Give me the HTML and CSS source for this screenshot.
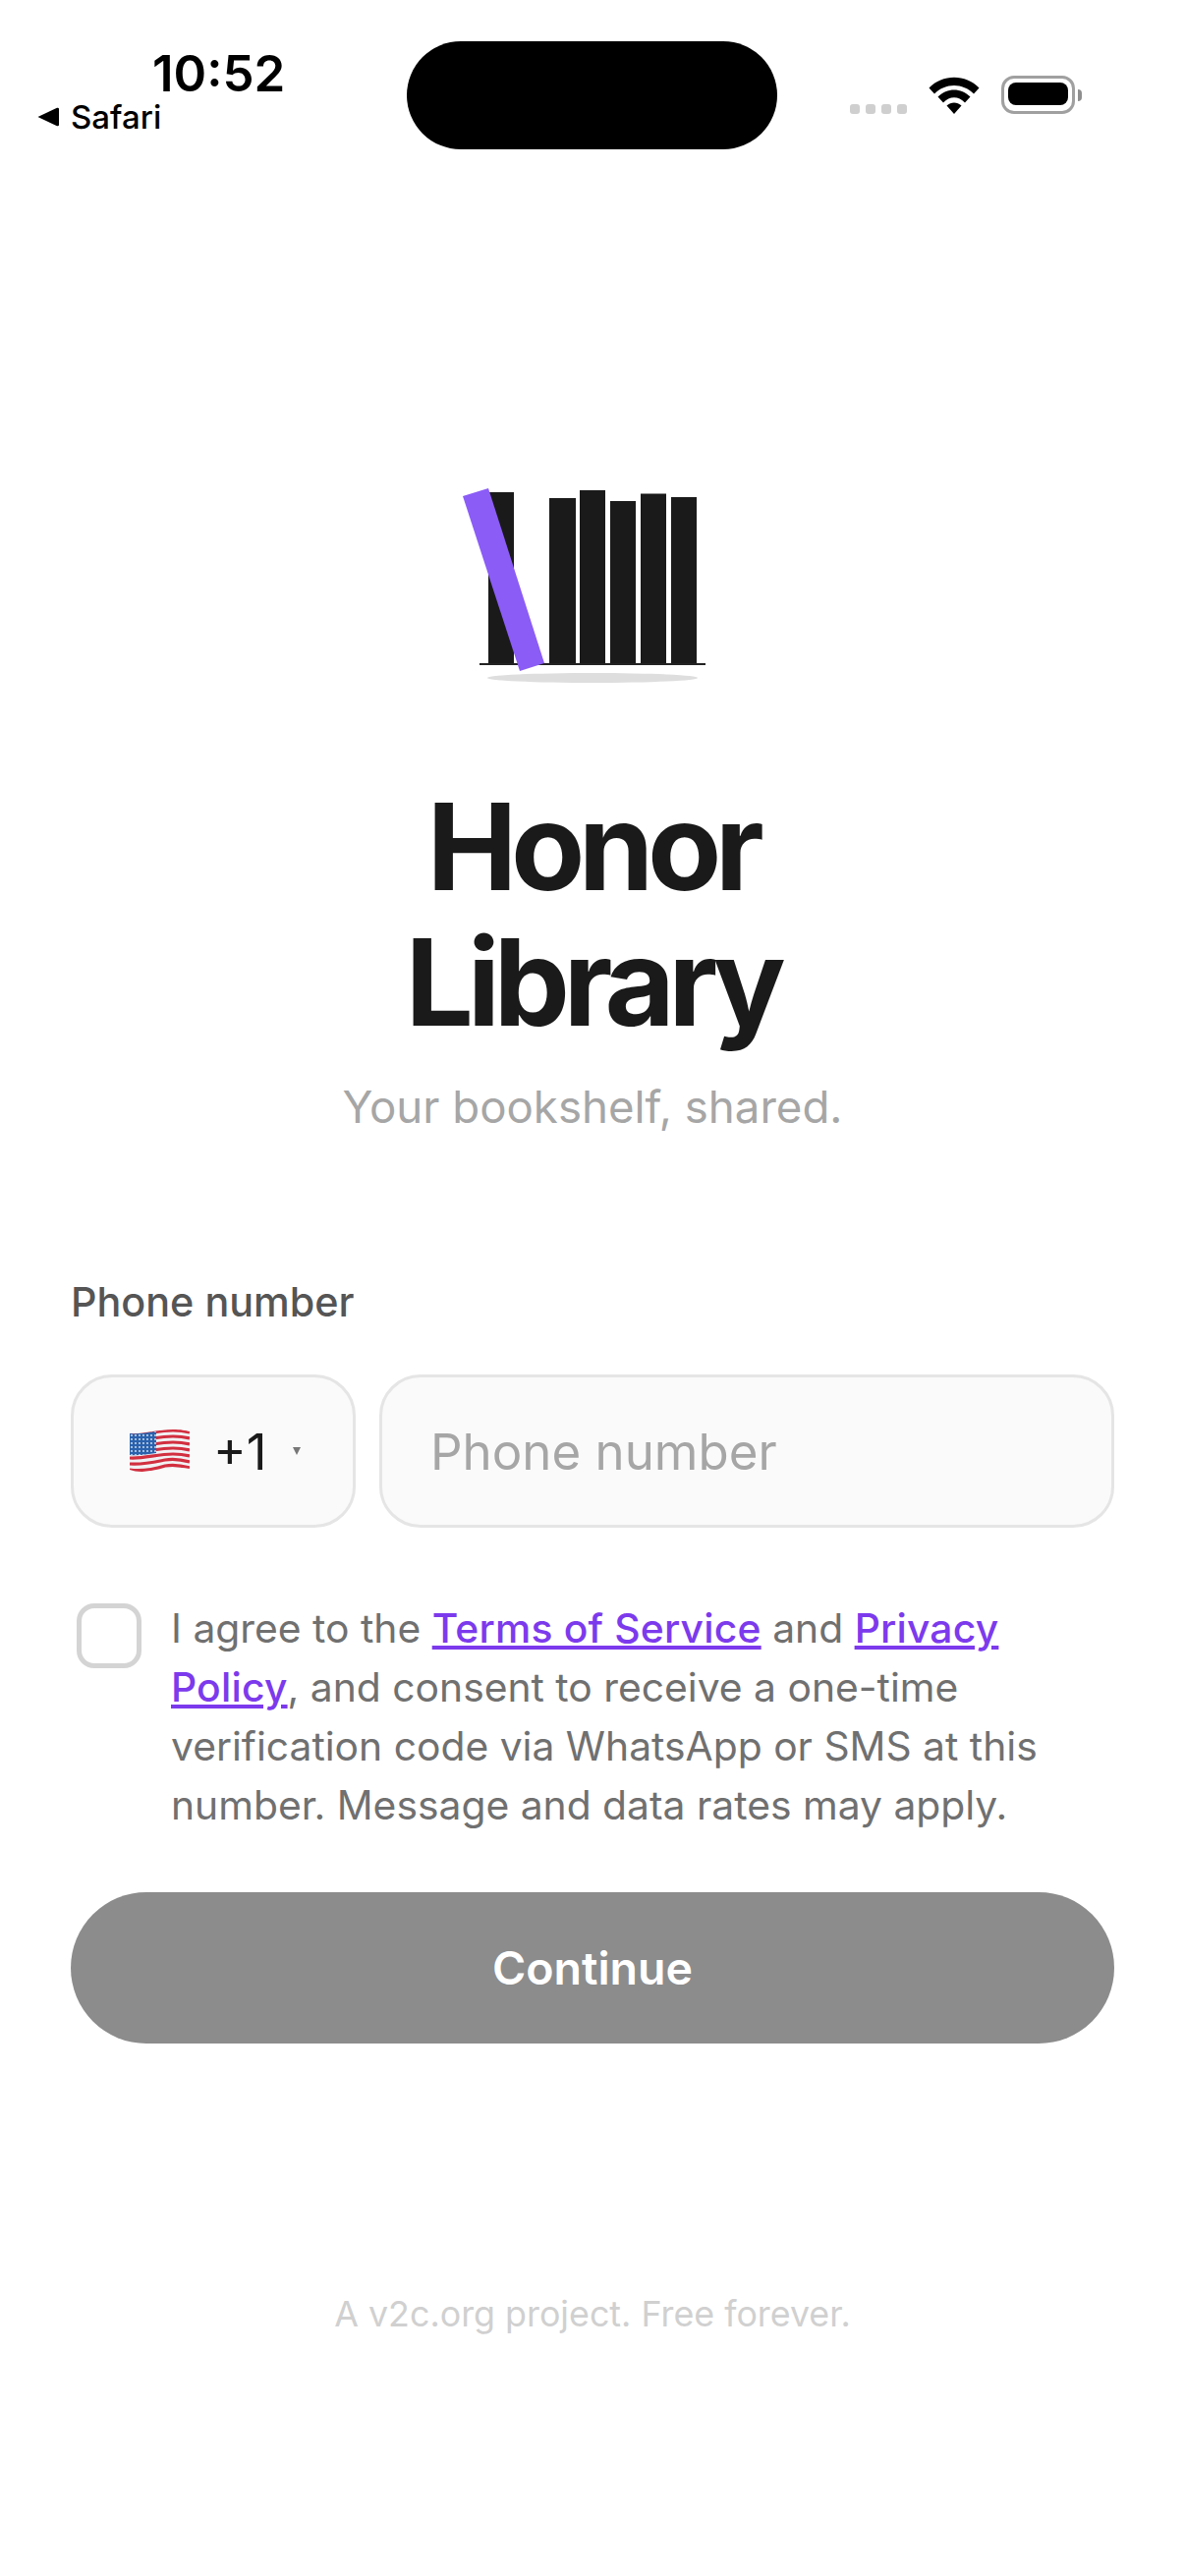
FILE: index.html
```html
<!DOCTYPE html>
<html lang="en">
<head>
  <meta charset="UTF-8" />
  <meta name="viewport" content="width=device-width, initial-scale=1.0" />
  <title>Honor Library</title>
  <link rel="stylesheet" href="styles.css">
</head>
<body>
  <div class="status-bar">
    <div class="status-left">
      <div class="clock">10:52</div>
      <div class="back-app">
        <svg class="back-arrow" viewBox="0 0 22 20"><path d="M0.5 10 L20 0.8 Q22 0.3 22 2 L22 18 Q22 19.7 20 19.2 Z" /></svg>
        <span>Safari</span>
      </div>
    </div>
    <div class="island"></div>
    <div class="status-right">
      <div class="signal"><i></i><i></i><i></i><i></i></div>
      <svg class="wifi" viewBox="0 0 52 38">
        <path d="M0.5 11.5 C14 -3 38 -3 51.5 11.5 L46 17.5 C35 6 17 6 6 17.5 Z" />
        <path d="M9.5 20.5 C19 11 33 11 42.500 20.500 L37 26.500 C30.500 19.500 21.500 19.500 15 26.500 Z" />
        <path d="M18.500 29.500 C23 25.500 29 25.500 33.500 29.500 L26 38 Z" />
      </svg>
      <div class="battery"><div class="battery-level"></div></div>
      <div class="battery-cap"></div>
    </div>
  </div>

  <main class="login">
    <svg class="logo" viewBox="0 0 326 240">
      <ellipse cx="163" cy="220" rx="107" ry="5" fill="#dedede" />
      <rect x="57" y="31" width="26" height="174" fill="#1a1a1a" />
      <rect x="119" y="37" width="27" height="168" fill="#1a1a1a" />
      <rect x="150" y="29" width="26" height="176" fill="#1a1a1a" />
      <rect x="181" y="40" width="26" height="165" fill="#1a1a1a" />
      <rect x="212" y="32.500" width="26" height="172.500" fill="#1a1a1a" />
      <rect x="243" y="36" width="26" height="169" fill="#1a1a1a" />
      <rect x="48" y="205" width="230" height="2" fill="#222" />
      <polygon points="31,35 57,27 114,205 89,213" fill="#8b5cf6" />
    </svg>

    <h1 class="title">Honor<br>Library</h1>
    <p class="tagline">Your bookshelf, shared.</p>

    <label class="field-label" for="phone">Phone number</label>
    <div class="phone-row">
      <button class="country" type="button">
        <svg class="flag" viewBox="0 0 61 44">
          <defs>
            <clipPath id="flag-shape">
              <path d="M0 4 C14 5 28 0 44 0 C52 0 57 1 61 2 L61 40 C50 38 42 39 30 41 C18 43 8 44 0 41 Z" />
            </clipPath>
            <pattern id="stars" width="4" height="4" patternUnits="userSpaceOnUse">
              <circle cx="2" cy="2" r="0.9" fill="#dfe8f5" />
            </pattern>
          </defs>
          <g clip-path="url(#flag-shape)">
            <rect width="61" height="44" fill="#f1f1f3" />
            <g class="flag-stripes">
              <path d="M0 5 C14 6 28 1 44 1 C52 1 57 2 61 3" />
              <path d="M0 11 C14 12 28 7 44 7 C52 7 57 8 61 9" />
              <path d="M0 17 C14 18 28 13 44 13 C52 13 57 14 61 15" />
              <path d="M0 23 C14 24 28 19 44 19 C52 19 57 20 61 21" />
              <path d="M0 29 C14 30 28 25 44 25 C52 25 57 26 61 27" />
              <path d="M0 35 C14 36 26 33 36 31 C46 29 54 31 61 33" />
              <path d="M0 41 C14 43 26 40 36 37 C46 35 54 37 61 39" />
            </g>
            <path d="M0 4 C10 5 18 3 27 2 L27 24 C18 25 10 27 0 26 Z" fill="#2a62ad" />
            <path d="M0 4 C10 5 18 3 27 2 L27 24 C18 25 10 27 0 26 Z" fill="url(#stars)" />
          </g>
        </svg>
        <span class="dial-code">+1</span>
        <span class="caret"></span>
      </button>
      <input class="phone-input" id="phone" type="tel" placeholder="Phone number" />
    </div>

    <div class="consent">
      <span class="checkbox"></span>
      <p class="consent-text">I agree to the <a href="#">Terms of Service</a> and <a href="#">Privacy Policy</a>, and consent to receive a one-time verification code via WhatsApp or SMS at this number. Message and data rates may apply.</p>
    </div>

    <button class="continue" type="button">Continue</button>

    <p class="footer">A v2c.org project. Free forever.</p>
  </main>
</body>
</html>
```

FILE: styles.css
```css
* {
  box-sizing: border-box;
}
body {
  margin: 0;
  background: #fff;
  color: #1a1a1a;
  font-family: Inter, "Liberation Sans", sans-serif;
}

/* status bar */
.status-bar {
  display: flex;
  height: 170px;
  position: relative;
}
.status-left {
  width: 414px;
  padding-top: 47px;
}
.clock {
  margin-left: 155px;
  font-size: 51px;
  line-height: 55px;
  font-weight: 600;
  color: #000;
}
.back-app {
  display: flex;
  align-items: center;
  gap: 12px;
  margin-left: 38px;
  margin-top: 0;
  font-size: 33px;
  line-height: 34px;
  font-weight: 500;
  color: #000;
}
.back-arrow {
  width: 22px;
  height: 20px;
  fill: #000;
}
.island {
  width: 377px;
  height: 110px;
  margin-top: 42px;
  border-radius: 55px;
  background: #000;
}
.status-right {
  display: flex;
  align-items: flex-end;
  height: 116px;
  margin-left: 74px;
}
.signal {
  display: flex;
  gap: 6px;
  margin-bottom: 0;
}
.signal i {
  width: 10px;
  height: 10px;
  border-radius: 3px;
  background: #cfcfcf;
}
.wifi {
  width: 52px;
  height: 38px;
  margin-left: 22px;
  fill: #000;
}
.battery {
  width: 75px;
  height: 39px;
  margin-left: 22px;
  padding: 5px;
  border: 3px solid #a0a0a0;
  border-radius: 13px;
}
.battery-level {
  height: 100%;
  border-radius: 8px;
  background: #000;
  margin: -1px;
}
.battery-cap {
  width: 4px;
  height: 12px;
  margin-left: 3px;
  margin-bottom: 13px;
  border-radius: 0 6px 6px 0;
  background: #8e8e8e;
}

/* login */
.login {
  display: flex;
  flex-direction: column;
  padding: 0 72px;
}
.logo {
  width: 326px;
  height: 240px;
  align-self: center;
  margin-top: 300px;
}
.title {
  margin: 83px 0 0;
  font-size: 123px;
  line-height: 138px;
  font-weight: 700;
  letter-spacing: -6.5px;
  text-align: center;
  color: #1a1a1a;
}
.tagline {
  margin: 28px 0 0;
  font-size: 45.6px;
  line-height: 60px;
  color: #a6a6a6;
  text-align: center;
}
.field-label {
  margin-top: 138px;
  font-size: 41.3px;
  line-height: 60px;
  font-weight: 500;
  color: #555;
}
.phone-row {
  display: flex;
  gap: 24px;
  margin-top: 44px;
}
.country {
  display: flex;
  align-items: center;
  width: 290px;
  height: 156px;
  padding: 0 0 0 57px;
  border: 3px solid #e5e5e5;
  border-radius: 42px;
  background: #fafafa;
  font-family: inherit;
}
.flag {
  width: 61px;
  height: 44px;
}
.flag-stripes path {
  fill: none;
  stroke: #d22f3f;
  stroke-width: 3.200;
}
.dial-code {
  margin-left: 24px;
  font-size: 51px;
  color: #1a1a1a;
}
.caret {
  width: 0;
  height: 0;
  margin-left: 26px;
  border-left: 4px solid transparent;
  border-right: 4px solid transparent;
  border-top: 8px solid #777;
}
.phone-input {
  flex: 1;
  min-width: 0;
  height: 156px;
  padding: 0 49px;
  border: 3px solid #e5e5e5;
  border-radius: 42px;
  background: #fafafa;
  font-family: inherit;
  font-size: 51px;
  color: #1a1a1a;
}
.phone-input::placeholder {
  color: #a6a6a6;
  opacity: 1;
}
.consent {
  display: flex;
  gap: 30px;
  margin-top: 72px;
}
.checkbox {
  flex: none;
  width: 66px;
  height: 66px;
  margin: 5px 0 0 6px;
  border: 5px solid #d4d4d4;
  border-radius: 18px;
  background: #fff;
}
.consent-text {
  margin: 0;
  font-size: 40.8px;
  line-height: 60px;
  color: #707070;
}
.consent-text a {
  color: #7c3aed;
  font-weight: 500;
  letter-spacing: 0.2px;
  text-decoration: underline;
}
.continue {
  height: 154px;
  margin-top: 59px;
  border: 0;
  border-radius: 77px;
  background: #8c8c8c;
  color: #fff;
  font-family: inherit;
  font-size: 46.5px;
  font-weight: 600;
}
.footer {
  margin: 251px 0 0;
  font-size: 35.8px;
  line-height: 48px;
  text-align: center;
  color: #d0d0d0;
}
```
